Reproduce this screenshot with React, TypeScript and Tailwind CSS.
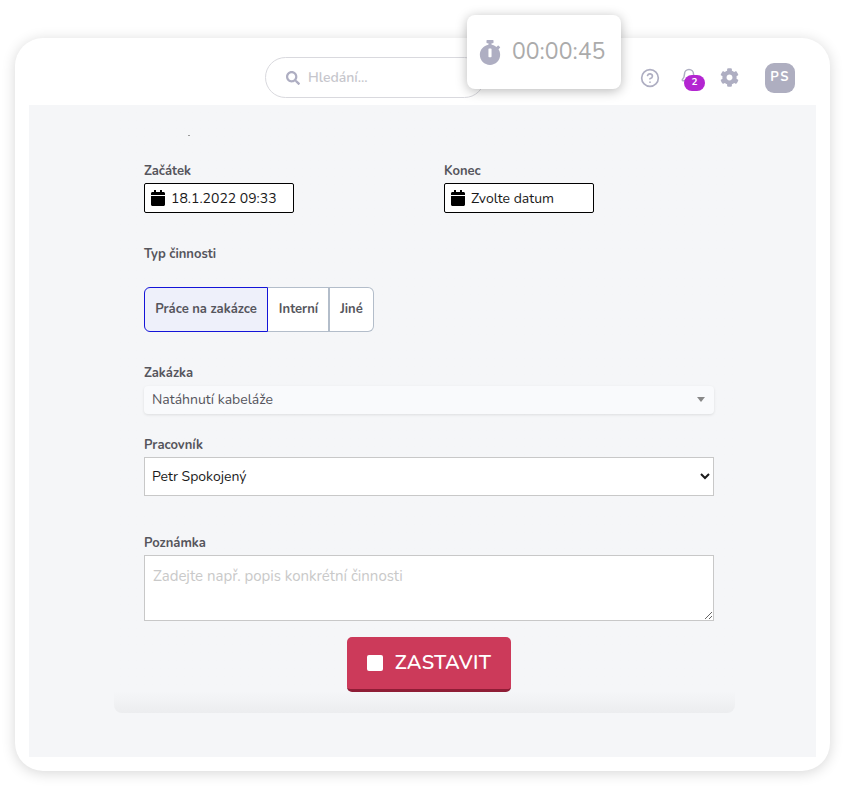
import { Bell, CircleHelp } from "lucide-react";
import { FaCalendar, FaCog, FaSearch, FaStopwatch } from "react-icons/fa";

function Label({ children }: { children: string }) {
  return <div className="text-[13px] leading-4 font-bold text-[#55555c]">{children}</div>;
}

function DateField({ label, value }: { label: string; value: string }) {
  return (
    <div className="w-[150px]">
      <Label>{label}</Label>
      <div className="mt-[4px] flex h-[30px] items-center gap-[6px] rounded-[2px] border border-black bg-white pl-[6px] text-[14px] text-[#1a1a1a]">
        <FaCalendar className="h-[16px] w-[14px] text-black" />
        <span>{value}</span>
      </div>
    </div>
  );
}

export default function App() {
  return (
    <div className="h-[786px] w-[845px] bg-white px-[15px] pt-[38px] font-['Nunito','Lato','Noto_Sans',sans-serif]">
      <div className="relative flex h-[733px] w-[815px] flex-col rounded-[28px] bg-white px-[14px] pb-[14px] shadow-[0_2px_14px_rgba(0,0,0,0.16)]">
        {/* top bar */}
        <header className="flex h-[67px] shrink-0 items-center pl-[236px] pt-[12px] shadow-[0_2px_2px_-1px_rgba(0,0,0,0.05)]">
          <div className="flex h-[41px] w-[220px] items-center gap-[8px] rounded-full border border-[#d9d9de] pl-[20px] text-[14px] font-semibold text-[#c6c6cc]">
            <FaSearch className="h-[14px] w-[14px] text-[#aeaec2]" />
            <span>Hledání...</span>
          </div>
          <CircleHelp className="ml-[155px] h-[20px] w-[20px] text-[#aeaec2]" strokeWidth={2} />
          <div className="relative ml-[20px] h-[20px] w-[20px]">
            <Bell className="h-[18px] w-[18px] text-[#aeaec2]" strokeWidth={2} />
            <span className="absolute left-[4px] top-[7px] flex h-[16px] w-[21px] items-center justify-center rounded-full bg-[#b325d1] text-[10px] font-bold text-white">
              2
            </span>
          </div>
          <FaCog className="ml-[20px] h-[19px] w-[19px] text-[#aeaec2]" />
          <div className="ml-[26px] flex h-[30px] w-[30px] items-center justify-center rounded-[9px] bg-[#aeaec0] pt-[1px] text-[13px] font-bold tracking-[1.5px] text-white">
            PS
          </div>
        </header>

        {/* running timer */}
        <div className="absolute left-[452px] top-[-23px] flex h-[74px] w-[154px] items-center gap-[11px] rounded-[8px] bg-white pl-[12px] shadow-[0_2px_12px_rgba(0,0,0,0.28)]">
          <FaStopwatch className="h-[25px] w-[22px] text-[#aeaec2]" />
          <span className="text-[23px] text-[#ababab]">00:00:45</span>
        </div>

        <main className="flex-1 bg-[#f5f6f8] pl-[85px] pr-[81px]">
          <div className="h-[608px] rounded-b-[8px] bg-gradient-to-b from-[#f5f6f8] from-[96.5%] to-[#ecedef] pl-[30px] pr-[21px]">
            <div className="h-[30px] pl-[44px] pt-[30px]">
              <div className="h-px w-[2px] bg-[#9a9a9a]" />
            </div>
            <div className="flex gap-[150px] pt-[28px]">
              <DateField label="Začátek" value="18.1.2022 09:33" />
              <DateField label="Konec" value="Zvolte datum" />
            </div>

            <div className="mt-[33px]">
              <Label>Typ činnosti</Label>
            </div>
            <div className="mt-[25px] flex h-[45px] text-[13px] font-bold text-[#55555c]">
              <div className="flex w-[124px] items-center justify-center rounded-l-[6px] border border-[#1414d8] bg-[#eef0fa]">
                Práce na zakázce
              </div>
              <div className="flex w-[62px] items-center justify-center border-y border-r-2 border-[#b3bdca] bg-white pl-[1px]">
                Interní
              </div>
              <div className="flex w-[44px] items-center justify-center rounded-r-[6px] border-y border-r border-[#b3bdca] bg-white">
                Jiné
              </div>
            </div>

            <div className="mt-[33px]">
              <Label>Zakázka</Label>
            </div>
            <div className="mt-[5px] flex h-[28px] items-center justify-between rounded-[4px] bg-[#f9fafc] pb-[2px] pl-[8px] pr-[9px] text-[14px] text-[#55555c] shadow-[0_1px_3px_rgba(0,0,0,0.1)]">
              <span>Natáhnutí kabeláže</span>
              <span className="h-0 w-0 border-x-[4px] border-t-[5px] border-x-transparent border-t-[#888888]" />
            </div>

            <div className="mt-[23px]">
              <Label>Pracovník</Label>
            </div>
            <select
              defaultValue="Petr Spokojený"
              className="mt-[4px] block h-[39px] w-full border border-[#c8c8c8] bg-white pl-[3px] pr-[2px] text-[14px] text-[#1a1a1a]"
            >
              <option>Petr Spokojený</option>
            </select>

            <div className="mt-[39px]">
              <Label>Poznámka</Label>
            </div>
            <textarea
              placeholder="Zadejte např. popis konkrétní činnosti"
              className="mt-[4px] block h-[66px] w-full border border-[#c8c8c8] bg-white px-[8px] pb-[8px] pt-[10px] text-[15px] leading-5 placeholder:text-[#c9c9c9]"
            />

            <div className="mt-[16px] flex justify-center">
              <button
                type="button"
                className="flex h-[55px] w-[164px] items-center justify-center gap-[12px] rounded-[5px] border-b-[3px] border-[#8f1d36] bg-[#cc3a5a] text-[20px] font-semibold tracking-[0.25px] text-white"
              >
                <span className="h-[16px] w-[16px] rounded-[2px] bg-white" />
                ZASTAVIT
              </button>
            </div>
          </div>
        </main>
      </div>
    </div>
  );
}
